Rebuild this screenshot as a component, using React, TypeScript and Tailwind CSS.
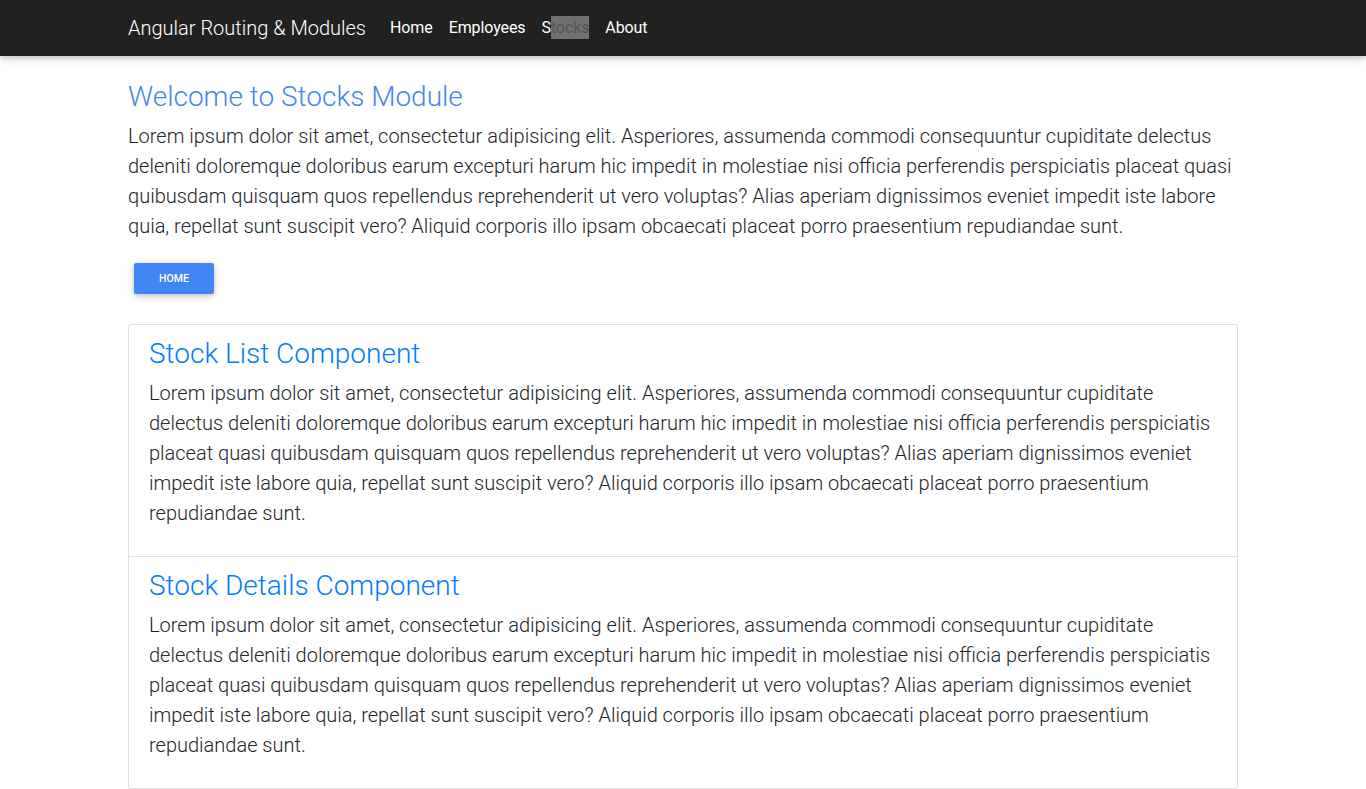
import React from "react";

const LOREM =
  "Lorem ipsum dolor sit amet, consectetur adipisicing elit. Asperiores, assumenda commodi consequuntur cupiditate delectus deleniti doloremque doloribus earum excepturi harum hic impedit in molestiae nisi officia perferendis perspiciatis placeat quasi quibusdam quisquam quos repellendus reprehenderit ut vero voluptas? Alias aperiam dignissimos eveniet impedit iste labore quia, repellat sunt suscipit vero? Aliquid corporis illo ipsam obcaecati placeat porro praesentium repudiandae sunt.";

export default function App() {
  return (
    <div className="min-h-screen bg-white font-['Roboto',sans-serif] font-light text-[#212529]">
      <nav className="relative z-10 h-14 bg-[#212121] shadow-[0_2px_5px_0_rgba(0,0,0,0.16),0_2px_10px_0_rgba(0,0,0,0.12)]">
        <div className="mx-auto flex h-full w-[1110px] items-center">
          <span className="mr-4 text-[20px] font-light leading-[30px] text-white">Angular Routing &amp; Modules</span>
          <ul className="flex items-center text-[16px] font-normal tracking-[-0.1px] text-white">
            <li className="px-2 leading-6">Home</li>
            <li className="px-2 leading-6">Employees</li>
            <li className="px-2 leading-6">
              S<span className="inline-block bg-[#707070] text-[#555555] leading-[23px]">tocks</span>
            </li>
            <li className="px-2 leading-6">About</li>
          </ul>
        </div>
      </nav>

      <main className="mx-auto w-[1110px] pt-6">
        <h3 className="mb-2 text-[28px] font-light leading-[33px] text-[#4285f4]">Welcome to Stocks Module</h3>
        <p className="mb-4 text-[20px] font-light leading-[30px]">{LOREM}</p>
        <button className="m-[6px] h-[31px] w-[80px] rounded-[2px] bg-[#4285f4] text-[10.5px] font-medium uppercase text-white shadow-[0_2px_5px_0_rgba(0,0,0,0.16),0_2px_10px_0_rgba(0,0,0,0.12)]">
          Home
        </button>

        <div className="mt-6 rounded-[3px] border border-[#dfdfdf]">
          <div className="border-b border-[#dfdfdf] px-5 py-3">
            <h3 className="mb-2 text-[28px] font-light leading-[33px] text-[#007bff]">Stock List Component</h3>
            <p className="mb-4 text-[20px] font-light leading-[30px]">{LOREM}</p>
          </div>
          <div className="px-5 py-3">
            <h3 className="mb-2 text-[28px] font-light leading-[33px] text-[#007bff]">Stock Details Component</h3>
            <p className="mb-4 text-[20px] font-light leading-[30px]">{LOREM}</p>
          </div>
        </div>
      </main>
    </div>
  );
}
